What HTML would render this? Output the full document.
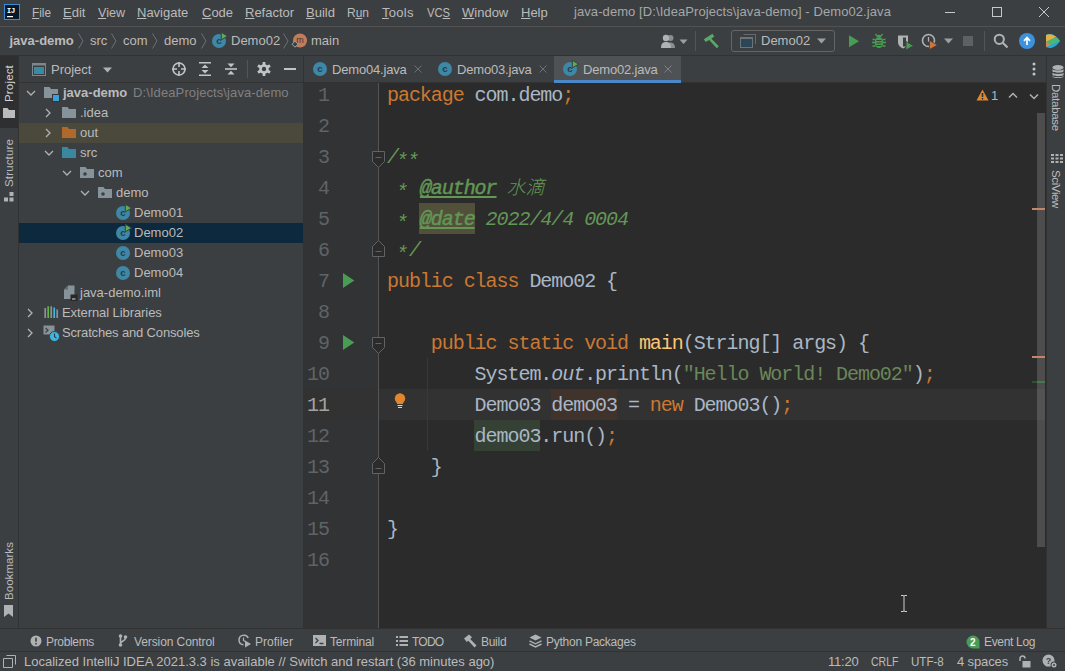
<!DOCTYPE html>
<html><head><meta charset="utf-8"><title>java-demo - Demo02.java</title>
<style>
*{box-sizing:border-box;margin:0;padding:0}
html,body{width:1065px;height:671px;overflow:hidden;background:#3c3f41}
body{position:relative;font-family:"Liberation Sans","Noto Sans CJK SC",sans-serif;font-size:13px;color:#bbbbbb}
.abs{position:absolute}
.t{position:absolute;white-space:nowrap;line-height:20px;height:20px;font-size:13px}
.sx{transform-origin:0 50%}
.b{font-weight:bold}
.g{color:#808080}
u{text-decoration:underline;text-underline-offset:1px;text-decoration-thickness:1px;text-decoration-skip-ink:none}
svg{position:absolute;overflow:visible}
/* frame */
#menubar{left:0;top:0;width:1065px;height:26px;background:#3c3f41}
#menuline{left:0;top:26px;width:1065px;height:1px;background:#515151}
#navbar{left:0;top:27px;width:1065px;height:28px;background:#3c3f41}
#navline{left:0;top:55px;width:1065px;height:1px;background:#323232}
#lstrip{left:0;top:56px;width:18px;height:573px;background:#3c3f41}
#lstripline{left:18px;top:56px;width:1px;height:573px;background:#323232}
#lactive{left:0;top:56px;width:18px;height:72px;background:#2d2f30}
#proj{left:19px;top:56px;width:284px;height:573px;background:#3c3f41}
#projline{left:303px;top:56px;width:1px;height:573px;background:#323232}
#projhead{left:19px;top:82px;width:284px;height:1px;background:#323232}
#tabs{left:304px;top:56px;width:742px;height:26px;background:#3c3f41}
#tabsline{left:304px;top:82px;width:742px;height:1px;background:#323232}
#editor{left:304px;top:83px;width:742px;height:546px;background:#2b2b2b}
#gutter{left:304px;top:83px;width:75px;height:546px;background:#313335}
#foldline{left:378px;top:83px;width:1px;height:546px;background:#555555}
#rstripline{left:1046px;top:56px;width:1px;height:573px;background:#323232}
#rstrip{left:1047px;top:56px;width:18px;height:573px;background:#3c3f41}
#botline{left:0;top:628px;width:1065px;height:1px;background:#323232}
#bottools{left:0;top:629px;width:1065px;height:22px;background:#3c3f41}
#statline{left:0;top:651px;width:1065px;height:1px;background:#323232}
#status{left:0;top:652px;width:1065px;height:19px;background:#3c3f41}
/* tree */
.row{position:absolute;left:19px;width:284px;height:20px}
/* vertical strip labels */
.vl{position:absolute;white-space:nowrap;font-size:12px;line-height:14px;height:14px;transform-origin:0 0}
/* code */
#codeclip{left:0;top:83px;width:1046px;height:545px;overflow:hidden}
#codeclip>*{margin-top:-83px}
#caretrow{left:379px;top:389px;width:666px;height:31px;background:#323232}
#caretgut{left:304px;top:389px;width:74px;height:31px;background:#323232}
#indent{left:427px;top:358px;width:1px;height:93px;background:#393939}
.ln{position:absolute;left:304px;width:25px;text-align:right;font-family:"Liberation Mono",monospace;font-size:20px;letter-spacing:-1.05px;line-height:31px;height:31px;color:#606366;padding-top:1px;box-sizing:content-box}
.ln.cur{color:#a4a3a3}
.cl{position:absolute;left:387px;white-space:pre;font-family:"Liberation Mono","Noto Sans CJK SC",monospace;font-size:20px;letter-spacing:-1.05px;line-height:31px;height:31px;color:#a9b7c6;padding-top:1px;box-sizing:content-box}
.cj{font-size:19px;font-weight:300;letter-spacing:0;margin-left:-1px}
.as{position:relative;top:4px;left:-2px}
.f{color:#ffc66d}.sf{font-style:italic}
.k{color:#cc7832}.s{color:#6a8759}.d{color:#629755;font-style:italic}.dt{color:#629755;font-style:italic;font-weight:normal;-webkit-text-stroke:0.45px #629755;text-decoration:underline;text-decoration-skip-ink:none;text-underline-offset:2px}
</style></head>
<body>
<!-- frame -->
<div class="abs" id="menubar"></div><div class="abs" id="menuline"></div>
<div class="abs" id="navbar"></div><div class="abs" id="navline"></div>
<div class="abs" id="lstrip"></div><div class="abs" id="lactive"></div><div class="abs" id="lstripline"></div>
<div class="abs" id="proj"></div><div class="abs" id="projhead"></div><div class="abs" id="projline"></div>
<div class="abs" id="tabs"></div><div class="abs" id="tabsline"></div>
<div class="abs" id="editor"></div><div class="abs" id="gutter"></div><div class="abs" id="foldline"></div>
<div class="abs" id="rstripline"></div><div class="abs" id="rstrip"></div>
<div class="abs" id="botline"></div><div class="abs" id="bottools"></div>
<div class="abs" id="statline"></div><div class="abs" id="status"></div>
<!-- MENU -->
<svg style="left:4px;top:4px" width="16" height="16" viewBox="0 0 16 16"><rect x="0.500" y="0.500" width="15" height="15" fill="#07182b" stroke="#3a8ed6" stroke-width="1"/><rect x="3" y="12" width="6" height="1.200" fill="#ffffff"/><text x="2.800" y="8.800" font-family="Liberation Mono,monospace" font-weight="bold" font-size="7.500" fill="#ffffff" letter-spacing="-0.500">IJ</text></svg>
<div class="t sx" style="left:32px;top:3px;transform:scaleX(0.905)"><u>F</u>ile</div>
<div class="t" style="left:63px;top:3px"><u>E</u>dit</div>
<div class="t sx" style="left:98px;top:3px;transform:scaleX(0.965)"><u>V</u>iew</div>
<div class="t" style="left:137px;top:3px"><u>N</u>avigate</div>
<div class="t" style="left:202px;top:3px"><u>C</u>ode</div>
<div class="t" style="left:245px;top:3px"><u>R</u>efactor</div>
<div class="t" style="left:306px;top:3px"><u>B</u>uild</div>
<div class="t sx" style="left:347px;top:3px;transform:scaleX(0.92)">R<u>u</u>n</div>
<div class="t" style="left:382px;top:3px;letter-spacing:0.3px"><u>T</u>ools</div>
<div class="t sx" style="left:427px;top:3px;transform:scaleX(0.865)">VC<u>S</u></div>
<div class="t" style="left:462px;top:3px"><u>W</u>indow</div>
<div class="t" style="left:521px;top:3px"><u>H</u>elp</div>
<div class="t" style="left:574px;top:2px;color:#a5a7a8;letter-spacing:0.08px">java-demo [D:\IdeaProjects\java-demo] - Demo02.java</div>
<!-- window controls -->
<svg style="left:944px;top:6px" width="12" height="12" viewBox="0 0 12 12"><path d="M1 6.5H11" stroke="#c8c8c8" stroke-width="1" fill="none"/></svg>
<svg style="left:991px;top:6px" width="12" height="12" viewBox="0 0 12 12"><rect x="1.5" y="1.5" width="9" height="9" stroke="#c8c8c8" stroke-width="1" fill="none"/></svg>
<svg style="left:1038px;top:6px" width="12" height="12" viewBox="0 0 12 12"><path d="M1 1L11 11M11 1L1 11" stroke="#c8c8c8" stroke-width="1" fill="none"/></svg>
<!-- NAV -->
<div class="t b" style="left:9.500px;top:31px">java-demo</div>
<svg style="left:77px;top:33px" width="8" height="16" viewBox="0 0 8 16"><path d="M1.5 0.5L6 8L1.5 15.5" stroke="#6e7173" stroke-width="1" fill="none"/></svg>
<div class="t" style="left:90px;top:31px">src</div>
<svg style="left:110px;top:33px" width="8" height="16" viewBox="0 0 8 16"><path d="M1.5 0.5L6 8L1.5 15.5" stroke="#6e7173" stroke-width="1" fill="none"/></svg>
<div class="t" style="left:123px;top:31px">com</div>
<svg style="left:151px;top:33px" width="8" height="16" viewBox="0 0 8 16"><path d="M1.5 0.5L6 8L1.5 15.5" stroke="#6e7173" stroke-width="1" fill="none"/></svg>
<div class="t" style="left:164px;top:31px">demo</div>
<svg style="left:200px;top:33px" width="8" height="16" viewBox="0 0 8 16"><path d="M1.5 0.5L6 8L1.5 15.5" stroke="#6e7173" stroke-width="1" fill="none"/></svg>
<svg style="left:211px;top:32px" width="17" height="17" viewBox="0 0 17 17"><circle cx="8" cy="9" r="7" fill="#3e87a6"/><text x="8" y="12" text-anchor="middle" font-family="Liberation Sans,sans-serif" font-size="9.500" font-weight="bold" fill="#243c49">c</text><path d="M10.300 0.300L16.600 4.100L10.300 7.900Z" fill="#5fad52" stroke="#3c3f41" stroke-width="1"/></svg>
<div class="t" style="left:231px;top:31px">Demo02</div>
<svg style="left:282px;top:33px" width="8" height="16" viewBox="0 0 8 16"><path d="M1.5 0.5L6 8L1.5 15.5" stroke="#6e7173" stroke-width="1" fill="none"/></svg>
<svg style="left:290px;top:32px" width="19" height="18" viewBox="0 0 19 18"><circle cx="10" cy="8.500" r="7" fill="#c07d5e"/><text x="10" y="11.300" text-anchor="middle" font-family="Liberation Sans,sans-serif" font-size="9" fill="#4d2f22">m</text><path d="M5 9.200L8 12.200L5 15.200L2 12.200Z" fill="#3c3f41" stroke="#9aa7b0" stroke-width="1"/></svg>
<div class="t" style="left:311px;top:31px">main</div>
<!-- right toolbar -->
<svg style="left:661px;top:34px" width="28" height="14" viewBox="0 0 28 14"><circle cx="9.5" cy="4" r="3" fill="#8a8d8f"/><path d="M5 14c0-4 2-5.5 4.5-5.5S14 10 14 14Z" fill="#8a8d8f"/><circle cx="5" cy="4" r="3.2" fill="#afb1b3"/><path d="M0 14c0-4.5 2-6 5-6s5 1.500 5 6Z" fill="#afb1b3"/><path d="M18.500 5.500h8l-4 4.500Z" fill="#9da0a2"/></svg>
<div class="abs" style="left:695px;top:31px;width:1px;height:20px;background:#555555"></div>
<svg style="left:703px;top:33px" width="17" height="16" viewBox="0 0 17 16"><path d="M0.800 6.200L9.500 0.800L11.300 3.700L8.300 5.600L15.800 13.200L13.800 15.200L6.200 6.900L2.600 9.100Z" fill="#59a869"/></svg>
<div class="abs" style="left:731px;top:30px;width:104px;height:22px;border:1px solid #646464;border-radius:3px"></div>
<svg style="left:740px;top:34px" width="16" height="14" viewBox="0 0 16 14"><path d="M3.500 0.500h12v9.500" stroke="#666a6c" fill="none"/><rect x="0.500" y="3.500" width="12" height="10" fill="#2c4657" stroke="#6b7479"/><rect x="0.500" y="3.500" width="12" height="1.500" fill="#6b7479"/></svg>
<div class="t" style="left:761px;top:31px">Demo02</div>
<svg style="left:817px;top:38px" width="9" height="6" viewBox="0 0 9 6"><path d="M0 0.500h9l-4.500 5Z" fill="#9da0a2"/></svg>
<svg style="left:848px;top:35px" width="12" height="13" viewBox="0 0 12 13"><path d="M1 0.300L11 6.300L1 12.300Z" fill="#499c54"/></svg>
<svg style="left:872px;top:33px" width="14" height="16" viewBox="0 0 14 16"><ellipse cx="7" cy="9.500" rx="4.200" ry="5.500" fill="#499c54"/><path d="M4.500 4.200a2.500 2.500 0 0 1 5 0Z" fill="#499c54"/><path d="M3.500 1L5 3M10.500 1L9 3M0.500 6.500h3M10.500 6.500h3M0 9.500h3.500M10.500 9.500h3.500M0.500 13h3M10.500 13h3" stroke="#499c54" stroke-width="1.300" fill="none"/><path d="M4.500 7.500h5M4.500 10h5M4.500 12.500h5" stroke="#3c3f41" stroke-width="1"/></svg>
<svg style="left:897px;top:34px" width="17" height="16" viewBox="0 0 17 16"><path d="M1 1.500h10v7c0 3-2.500 5-5 6c-2.500-1-5-3-5-6Z" fill="#afb1b3"/><path d="M6 3.500h3v9H6Z" fill="#3c3f41"/><path d="M9 7.500L16.500 11.700L9 16Z" fill="#499c54" stroke="#3c3f41" stroke-width="0.800"/></svg>
<svg style="left:921px;top:33px" width="17" height="17" viewBox="0 0 17 17"><circle cx="7.500" cy="7.500" r="6" fill="none" stroke="#afb1b3" stroke-width="1.600"/><path d="M7.500 4v4l2.500 1.500" stroke="#afb1b3" stroke-width="1.300" fill="none"/><path d="M8.500 7.500L16.500 12L8.500 16.500Z" fill="#d0743c" stroke="#3c3f41" stroke-width="0.800"/></svg>
<svg style="left:944px;top:38px" width="9" height="6" viewBox="0 0 9 6"><path d="M0 0.500h9l-4.500 5Z" fill="#9da0a2"/></svg>
<div class="abs" style="left:963px;top:36px;width:10px;height:10px;background:#5e6062"></div>
<div class="abs" style="left:984px;top:31px;width:1px;height:20px;background:#555555"></div>
<svg style="left:993px;top:33px" width="16" height="16" viewBox="0 0 16 16"><circle cx="6.300" cy="6.300" r="4.600" fill="none" stroke="#afb1b3" stroke-width="2"/><path d="M9.800 9.800L14.500 14.500" stroke="#afb1b3" stroke-width="2.200"/></svg>
<svg style="left:1019px;top:33px" width="16" height="16" viewBox="0 0 16 16"><circle cx="8" cy="8" r="8" fill="#3c93dd"/><path d="M8 12V5M5 7.800L8 4.600L11 7.800" stroke="#fff" stroke-width="1.700" fill="none"/></svg>
<svg style="left:1045px;top:33px" width="16" height="16" viewBox="0 0 16 16"><path d="M1 2C6 -1 12 3 15 8C12 13 6 17 1 14Z" fill="#21a6d9"/><path d="M1 2C5 0 9 2 11 4L1 9Z" fill="#e3b341"/><path d="M1 9L11 4C13 5.500 14 7 15 8L6 12Z" fill="#4fb477"/><path d="M1 9L6 12L1 14Z" fill="#d9894a"/></svg>
<!-- LEFT STRIP -->
<div class="vl" style="left:2px;top:102px;transform:rotate(-90deg);color:#d5d5d5;font-size:11.500px;letter-spacing:0.170px">Project</div>
<svg style="left:3px;top:108px" width="12" height="10" viewBox="0 0 12 10"><path d="M0 0h4.500l1.500 2H12v8H0Z" fill="#b9bbbd"/></svg>
<div class="vl" style="left:2px;top:187px;transform:rotate(-90deg);font-size:11.500px;letter-spacing:0.150px">Structure</div>
<svg style="left:4px;top:192px" width="10" height="10" viewBox="0 0 10 10"><rect x="5.500" y="0" width="4" height="4" fill="#afb1b3"/><rect x="0" y="5.500" width="4" height="4" fill="#afb1b3"/><rect x="5.500" y="5.500" width="4" height="4" fill="#afb1b3"/></svg>
<div class="vl" style="left:2px;top:600px;transform:rotate(-90deg);font-size:11.500px;letter-spacing:0.050px">Bookmarks</div>
<svg style="left:4px;top:605px" width="9" height="12" viewBox="0 0 9 12"><path d="M0 0h9v12l-4.500-3.500L0 12Z" fill="#afb1b3"/></svg>
<!-- PROJECT HEADER -->
<svg style="left:32px;top:63px" width="14" height="13" viewBox="0 0 14 13"><rect x="0.500" y="0.500" width="13" height="12" fill="#3c3f41" stroke="#7f878c"/><rect x="0.500" y="0.500" width="13" height="2" fill="#7f878c"/><rect x="2" y="4" width="10" height="7" fill="#3a8aa3"/></svg>
<div class="t" style="left:51px;top:60px">Project</div>
<svg style="left:103px;top:67px" width="9" height="6" viewBox="0 0 9 6"><path d="M0 0.500h9l-4.500 5Z" fill="#afb1b3"/></svg>
<svg style="left:171px;top:61px" width="16" height="16" viewBox="0 0 16 16"><circle cx="8" cy="8" r="6" fill="none" stroke="#c1c3c5" stroke-width="1.600"/><path d="M8 1v5M8 10v5M1 8h5M10 8h5" stroke="#c1c3c5" stroke-width="1.600"/></svg>
<svg style="left:197px;top:61px" width="16" height="16" viewBox="0 0 16 16"><path d="M2 1.800h12M2 14.200h12" stroke="#c1c3c5" stroke-width="1.600"/><path d="M8 3.500L11.500 7h-7ZM8 12.500L11.500 9h-7Z" fill="#c1c3c5"/></svg>
<svg style="left:223px;top:61px" width="16" height="16" viewBox="0 0 16 16"><path d="M2 8h12" stroke="#c1c3c5" stroke-width="1.600"/><path d="M8 6.300L11.500 2.500h-7ZM8 9.700L11.500 13.500h-7Z" fill="#c1c3c5"/></svg>
<div class="abs" style="left:247px;top:60px;width:1px;height:18px;background:#555555"></div>
<svg style="left:256px;top:61px" width="16" height="16" viewBox="0 0 16 16"><g fill="#c1c3c5"><circle cx="8" cy="8" r="4.800"/><rect x="6.600" y="1" width="2.800" height="14" rx="0.500"/><rect x="6.600" y="1" width="2.800" height="14" rx="0.500" transform="rotate(60 8 8)"/><rect x="6.600" y="1" width="2.800" height="14" rx="0.500" transform="rotate(120 8 8)"/></g><circle cx="8" cy="8" r="2.200" fill="#3c3f41"/></svg>
<div class="abs" style="left:284px;top:68px;width:12px;height:2px;background:#c1c3c5"></div>
<!-- TREE -->
<div class="row" style="top:123px;background:#4b493c"></div>
<div class="row" style="top:223px;background:#0d293e"></div>
<!-- row: java-demo -->
<svg style="left:26px;top:90px" width="10" height="6"><path d="M1 1L5 5L9 1" stroke="#afb1b3" stroke-width="1.300" fill="none"/></svg>
<svg style="left:44px;top:87px" width="16" height="14" viewBox="0 0 16 14"><path d="M0 0h5.500l1.500 2H14v9H0Z" fill="#87939a"/><rect x="8.500" y="7.500" width="7" height="7" fill="#3fa1d3" stroke="#33363a" stroke-width="1"/></svg>
<div class="t b" style="left:63px;top:83px">java-demo</div>
<div class="t g" style="left:133px;top:83px;letter-spacing:0.1px">D:\IdeaProjects\java-demo</div>
<!-- row: .idea -->
<svg style="left:45px;top:108px" width="6" height="10"><path d="M1 1L5 5L1 9" stroke="#afb1b3" stroke-width="1.300" fill="none"/></svg>
<svg style="left:62px;top:107px" width="15" height="12" viewBox="0 0 15 12"><path d="M0 0h5.500l1.500 2H14v9H0Z" fill="#87939a"/></svg>
<div class="t" style="left:80px;top:103px">.idea</div>
<!-- row: out -->
<svg style="left:45px;top:128px" width="6" height="10"><path d="M1 1L5 5L1 9" stroke="#afb1b3" stroke-width="1.300" fill="none"/></svg>
<svg style="left:62px;top:127px" width="15" height="12" viewBox="0 0 15 12"><path d="M0 0h5.500l1.500 2H14v9H0Z" fill="#b0692d"/></svg>
<div class="t" style="left:80px;top:123px">out</div>
<!-- row: src -->
<svg style="left:44px;top:150px" width="10" height="6"><path d="M1 1L5 5L9 1" stroke="#afb1b3" stroke-width="1.300" fill="none"/></svg>
<svg style="left:62px;top:147px" width="15" height="12" viewBox="0 0 15 12"><path d="M0 0h5.500l1.500 2H14v9H0Z" fill="#3a88a0"/></svg>
<div class="t" style="left:80px;top:143px">src</div>
<!-- row: com -->
<svg style="left:62px;top:170px" width="10" height="6"><path d="M1 1L5 5L9 1" stroke="#afb1b3" stroke-width="1.300" fill="none"/></svg>
<svg style="left:80px;top:167px" width="15" height="12" viewBox="0 0 15 12"><path d="M0 0h5.500l1.500 2H14v9H0Z" fill="#87939a"/><circle cx="5" cy="7" r="1.800" fill="#3c3f41"/></svg>
<div class="t" style="left:98px;top:163px">com</div>
<!-- row: demo -->
<svg style="left:80px;top:190px" width="10" height="6"><path d="M1 1L5 5L9 1" stroke="#afb1b3" stroke-width="1.300" fill="none"/></svg>
<svg style="left:98px;top:187px" width="15" height="12" viewBox="0 0 15 12"><path d="M0 0h5.500l1.500 2H14v9H0Z" fill="#87939a"/><circle cx="5" cy="7" r="1.800" fill="#3c3f41"/></svg>
<div class="t" style="left:116px;top:183px">demo</div>
<!-- class rows -->
<svg style="left:116px;top:206px" width="15" height="15"><circle cx="7" cy="7" r="7" fill="#3e87a6"/><text x="7" y="10" text-anchor="middle" font-family="Liberation Sans,sans-serif" font-size="9.500" font-weight="bold" fill="#243c49">c</text><path d="M9.300 -1.700L15.600 2.100L9.300 5.900Z" fill="#5fad52" stroke="#3c3f41" stroke-width="1"/></svg>
<div class="t" style="left:134px;top:203px">Demo01</div>
<svg style="left:116px;top:226px" width="15" height="15"><circle cx="7" cy="7" r="7" fill="#3e87a6"/><text x="7" y="10" text-anchor="middle" font-family="Liberation Sans,sans-serif" font-size="9.500" font-weight="bold" fill="#243c49">c</text><path d="M9.300 -1.700L15.600 2.100L9.300 5.900Z" fill="#5fad52" stroke="#3c3f41" stroke-width="1"/></svg>
<div class="t" style="left:134px;top:223px">Demo02</div>
<svg style="left:116px;top:246px" width="15" height="15"><circle cx="7" cy="7" r="7" fill="#3e87a6"/><text x="7" y="10" text-anchor="middle" font-family="Liberation Sans,sans-serif" font-size="9.500" font-weight="bold" fill="#243c49">c</text></svg>
<div class="t" style="left:134px;top:243px">Demo03</div>
<svg style="left:116px;top:266px" width="15" height="15"><circle cx="7" cy="7" r="7" fill="#3e87a6"/><text x="7" y="10" text-anchor="middle" font-family="Liberation Sans,sans-serif" font-size="9.500" font-weight="bold" fill="#243c49">c</text></svg>
<div class="t" style="left:134px;top:263px">Demo04</div>
<!-- row: iml -->
<svg style="left:64px;top:285px" width="14" height="16" viewBox="0 0 14 16"><path d="M4 0.500H10.500v13.500H0V4.500Z" fill="#87939a"/><path d="M4 0.500v4H0Z" fill="#5d676d"/><rect x="6.500" y="9.500" width="7" height="6.500" fill="#26282a"/><rect x="8" y="13.500" width="3.500" height="1" fill="#d8dadc"/></svg>
<div class="t" style="left:80px;top:283px">java-demo.iml</div>
<!-- row: External Libraries -->
<svg style="left:27px;top:308px" width="6" height="10"><path d="M1 1L5 5L1 9" stroke="#afb1b3" stroke-width="1.300" fill="none"/></svg>
<svg style="left:44px;top:306px" width="15" height="12" viewBox="0 0 15 12"><path d="M1.200 2v10" stroke="#87939a" stroke-width="1.700"/><path d="M4.200 0.300v11.700" stroke="#62b543" stroke-width="1.700"/><path d="M7.200 0.300v11.700" stroke="#87939a" stroke-width="1.700"/><path d="M10.200 1.500v10.500" stroke="#40b6e0" stroke-width="1.700"/><path d="M13.200 3.500v8.500" stroke="#87939a" stroke-width="1.700"/></svg>
<div class="t" style="left:62px;top:303px;letter-spacing:-0.08px">External Libraries</div>
<!-- row: Scratches -->
<svg style="left:27px;top:328px" width="6" height="10"><path d="M1 1L5 5L1 9" stroke="#afb1b3" stroke-width="1.300" fill="none"/></svg>
<svg style="left:43px;top:325px" width="17" height="17" viewBox="0 0 17 17"><path d="M0.500 0.500h11v9h-11Z" fill="#87939a"/><path d="M2.500 3L5 5.200L2.500 7.500" stroke="#3c3f41" stroke-width="1.200" fill="none"/><circle cx="11.500" cy="11.500" r="5" fill="#40b6e0" stroke="#3c3f41" stroke-width="1"/><path d="M11.500 8.500v3.200l2 1.300" stroke="#3c3f41" stroke-width="1.200" fill="none"/></svg>
<div class="t" style="left:62px;top:323px;letter-spacing:-0.15px">Scratches and Consoles</div>
<!-- TABS -->
<div class="abs" style="left:554px;top:56px;width:127px;height:27px;background:#4e5254"></div>
<div class="abs" style="left:554px;top:80px;width:127px;height:3px;background:#4a88c7"></div>
<svg style="left:313px;top:62px" width="15" height="15"><circle cx="7" cy="7" r="7" fill="#3e87a6"/><text x="7" y="10" text-anchor="middle" font-family="Liberation Sans,sans-serif" font-size="9.500" font-weight="bold" fill="#243c49">c</text></svg>
<div class="t" style="left:332px;top:60px;letter-spacing:-0.18px">Demo04.java</div>
<svg style="left:414px;top:65px" width="8" height="8" viewBox="0 0 8 8"><path d="M0.500 0.500L7.500 7.500M7.500 0.500L0.500 7.500" stroke="#6e7072" stroke-width="1" fill="none"/></svg>
<svg style="left:438px;top:62px" width="15" height="15"><circle cx="7" cy="7" r="7" fill="#3e87a6"/><text x="7" y="10" text-anchor="middle" font-family="Liberation Sans,sans-serif" font-size="9.500" font-weight="bold" fill="#243c49">c</text></svg>
<div class="t" style="left:457px;top:60px;letter-spacing:-0.18px">Demo03.java</div>
<svg style="left:539px;top:65px" width="8" height="8" viewBox="0 0 8 8"><path d="M0.500 0.500L7.500 7.500M7.500 0.500L0.500 7.500" stroke="#6e7072" stroke-width="1" fill="none"/></svg>
<svg style="left:563px;top:62px" width="15" height="15"><circle cx="7" cy="7" r="7" fill="#3e87a6"/><text x="7" y="10" text-anchor="middle" font-family="Liberation Sans,sans-serif" font-size="9.500" font-weight="bold" fill="#243c49">c</text><path d="M9.300 -1.700L15.600 2.100L9.300 5.900Z" fill="#5fad52" stroke="#3c3f41" stroke-width="1"/></svg>
<div class="t" style="left:583px;top:60px;letter-spacing:-0.18px">Demo02.java</div>
<svg style="left:664px;top:65px" width="8" height="8" viewBox="0 0 8 8"><path d="M0.500 0.500L7.500 7.500M7.500 0.500L0.500 7.500" stroke="#7d8082" stroke-width="1" fill="none"/></svg>
<svg style="left:1032px;top:62px" width="4" height="14" viewBox="0 0 4 14"><circle cx="2" cy="2" r="1.500" fill="#c1c3c5"/><circle cx="2" cy="7" r="1.500" fill="#c1c3c5"/><circle cx="2" cy="12" r="1.500" fill="#c1c3c5"/></svg>
<!-- CODE -->
<div class="abs" id="codeclip">
<div class="abs" id="caretrow"></div><div class="abs" id="caretgut"></div><div class="abs" id="indent"></div>
<div class="abs" style="left:419px;top:203px;width:56px;height:31px;background:#52503a"></div>
<div class="abs" style="left:551px;top:389px;width:66px;height:31px;background:#40332b"></div>
<div class="abs" style="left:474px;top:420px;width:66px;height:31px;background:#344134"></div>
<div class="ln" style="top:79px">1</div>
<div class="cl" style="top:79px"><span class="k">package</span> com.demo<span class="k">;</span></div>
<div class="ln" style="top:110px">2</div>
<div class="ln" style="top:141px">3</div>
<div class="cl" style="top:141px"><span class="d">/<span class="as">*</span><span class="as">*</span></span></div>
<div class="ln" style="top:172px">4</div>
<div class="cl" style="top:172px"><span class="d"> <span class="as">*</span> <span class="dt">@author</span> <span class="cj">水滴</span></span></div>
<div class="ln" style="top:203px">5</div>
<div class="cl" style="top:203px"><span class="d"> <span class="as">*</span> <span class="dt">@date</span> 2022/4/4 0004</span></div>
<div class="ln" style="top:234px">6</div>
<div class="cl" style="top:234px"><span class="d"> <span class="as">*</span>/</span></div>
<div class="ln" style="top:265px">7</div>
<div class="cl" style="top:265px"><span class="k">public class</span> Demo02 {</div>
<div class="ln" style="top:296px">8</div>
<div class="ln" style="top:327px">9</div>
<div class="cl" style="top:327px">    <span class="k">public static void</span> <span class="f">main</span>(String[] args) {</div>
<div class="ln" style="top:358px">10</div>
<div class="cl" style="top:358px">        System.<span class="sf">out</span>.println(<span class="s">"Hello World! Demo02"</span>)<span class="k">;</span></div>
<div class="ln cur" style="top:389px">11</div>
<div class="cl" style="top:389px">        Demo03 demo03 = <span class="k">new</span> Demo03()<span class="k">;</span></div>
<div class="ln" style="top:420px">12</div>
<div class="cl" style="top:420px">        demo03.run()<span class="k">;</span></div>
<div class="ln" style="top:451px">13</div>
<div class="cl" style="top:451px">    }</div>
<div class="ln" style="top:482px">14</div>
<div class="ln" style="top:513px">15</div>
<div class="cl" style="top:513px">}</div>
<div class="ln" style="top:544px">16</div>
</div>
<!-- GUTTER ICONS -->
<svg style="left:343px;top:273px" width="12" height="15" viewBox="0 0 12 15"><path d="M0 0L11.300 7.500L0 15Z" fill="#499c54"/></svg>
<svg style="left:343px;top:335px" width="12" height="15" viewBox="0 0 12 15"><path d="M0 0L11.300 7.500L0 15Z" fill="#499c54"/></svg>
<!-- fold start markers: lines 3, 9 -->
<svg style="left:372px;top:151px" width="13" height="17" viewBox="0 0 13 17"><path d="M0.500 0.500h12v10l-6 6l-6-6Z" fill="#2b2b2b" stroke="#606366"/><path d="M3.500 6.500h6" stroke="#606366"/></svg>
<svg style="left:372px;top:337px" width="13" height="17" viewBox="0 0 13 17"><path d="M0.500 0.500h12v10l-6 6l-6-6Z" fill="#2b2b2b" stroke="#606366"/><path d="M3.500 6.500h6" stroke="#606366"/></svg>
<!-- fold end markers: lines 6, 13 -->
<svg style="left:372px;top:240px" width="13" height="17" viewBox="0 0 13 17"><path d="M0.500 16.500h12v-10l-6-6l-6 6Z" fill="#2b2b2b" stroke="#606366"/><path d="M3.500 11.500h6" stroke="#606366"/></svg>
<svg style="left:372px;top:457px" width="13" height="17" viewBox="0 0 13 17"><path d="M0.500 16.500h12v-10l-6-6l-6 6Z" fill="#2b2b2b" stroke="#606366"/><path d="M3.500 11.500h6" stroke="#606366"/></svg>
<!-- bulb -->
<svg style="left:394px;top:393px" width="12" height="16" viewBox="0 0 12 16"><circle cx="6" cy="5.500" r="5.200" fill="#e0872e"/><path d="M3 8h6v3H3Z" fill="#e0872e"/><path d="M3.500 12.500h5M4 14.500h4" stroke="#d8d8d8" stroke-width="1"/></svg>
<!-- inspection widget -->
<svg style="left:976px;top:89px" width="13" height="12" viewBox="0 0 13 12"><path d="M6.500 0.500L12.500 11.500H0.500Z" fill="#e0872e"/><path d="M6.500 4v4M6.500 9v1.500" stroke="#2b2b2b" stroke-width="1.500"/></svg>
<div class="t" style="left:991px;top:86px;font-size:13px;color:#a9b7c6">1</div>
<svg style="left:1008px;top:92px" width="10" height="7" viewBox="0 0 10 7"><path d="M1 5.500L5 1.500L9 5.500" stroke="#afb1b3" stroke-width="1.500" fill="none"/></svg>
<svg style="left:1029px;top:93px" width="10" height="7" viewBox="0 0 10 7"><path d="M1 1.500L5 5.500L9 1.500" stroke="#afb1b3" stroke-width="1.500" fill="none"/></svg>
<!-- scrollbar + stripe -->
<div class="abs" style="left:1037px;top:113px;width:8px;height:434px;background:rgba(255,255,255,0.165)"></div>
<div class="abs" style="left:1032px;top:208px;width:13px;height:2px;background:#c4866a"></div>
<div class="abs" style="left:1032px;top:356px;width:13px;height:2px;background:#c4866a"></div>
<div class="abs" style="left:1032px;top:381px;width:5px;height:2px;background:#2c5232"></div><div class="abs" style="left:1037px;top:381px;width:8px;height:2px;background:#427a4a"></div>
<!-- mouse I-beam -->
<svg style="left:900px;top:595px" width="8" height="17" viewBox="0 0 8 17"><path d="M1 0.500h2.500l0.500 1l0.500-1H7M4 1.500v14M1 16.500h2.500l0.500-1l0.500 1H7" stroke="#d0d0d0" stroke-width="1" fill="none"/></svg>
<!-- RIGHT STRIP -->
<svg style="left:1052px;top:65px" width="12" height="13" viewBox="0 0 12 13"><g fill="#afb1b3"><ellipse cx="6" cy="2.500" rx="5.500" ry="2.500"/><path d="M0.500 4.200c1 1.600 10 1.600 11 0v2.300c-1 1.600-10 1.600-11 0Z"/><path d="M0.500 7.700c1 1.600 10 1.600 11 0v2.300c-1 1.600-10 1.600-11 0Z"/><path d="M0.500 11.100c1 1.600 10 1.600 11 0v0.600c-1 1.700-10 1.700-11 0Z"/></g></svg>
<div class="vl" style="left:1063px;top:84px;transform:rotate(90deg);font-size:11.500px;letter-spacing:-0.290px">Database</div>
<svg style="left:1051px;top:154px" width="12" height="9" viewBox="0 0 12 9"><g fill="#afb1b3"><rect x="0" y="0" width="3" height="2"/><rect x="4.500" y="0" width="3" height="2"/><rect x="9" y="0" width="3" height="2"/><rect x="0" y="3.500" width="3" height="2"/><rect x="4.500" y="3.500" width="3" height="2"/><rect x="9" y="3.500" width="3" height="2"/><rect x="0" y="7" width="3" height="2"/><rect x="4.500" y="7" width="3" height="2"/><rect x="9" y="7" width="3" height="2"/></g></svg>
<div class="vl" style="left:1063px;top:170px;transform:rotate(90deg);font-size:11.500px;letter-spacing:-0.390px">SciView</div>
<!-- BOTTOM TOOLS -->
<svg style="left:30px;top:635px" width="12" height="12" viewBox="0 0 12 12"><circle cx="6" cy="6" r="5.500" fill="#afb1b3"/><path d="M6 2.800v4M6 8v1.500" stroke="#3c3f41" stroke-width="1.600"/></svg>
<div class="t" style="left:46px;top:632px;font-size:12px;letter-spacing:-0.34px">Problems</div>
<svg style="left:118px;top:634px" width="10" height="13" viewBox="0 0 10 13"><path d="M2.500 1v11M2.500 9.500c0-2.500 5-2 5-5.500" stroke="#afb1b3" stroke-width="1.600" fill="none"/><circle cx="2.500" cy="2" r="1.800" fill="#afb1b3"/><circle cx="7.500" cy="3" r="1.800" fill="#afb1b3"/><circle cx="2.500" cy="11" r="1.800" fill="#afb1b3"/></svg>
<div class="t" style="left:134px;top:632px;font-size:12px;letter-spacing:-0.1px">Version Control</div>
<svg style="left:238px;top:634px" width="14" height="14" viewBox="0 0 14 14"><path d="M10.200 4A4.800 4.800 0 1 0 5.500 10.800" stroke="#afb1b3" stroke-width="1.500" fill="none"/><path d="M5.500 3.500v3l1.500 1" stroke="#afb1b3" stroke-width="1.200" fill="none"/><path d="M7 6.500L13 10L7 13.500Z" fill="#afb1b3"/></svg>
<div class="t" style="left:255px;top:632px;font-size:12px">Profiler</div>
<svg style="left:313px;top:635px" width="13" height="11" viewBox="0 0 13 11"><rect x="0" y="0" width="13" height="11" fill="#afb1b3"/><path d="M2.500 3L5 5.500L2.500 8M6.500 8.500h4" stroke="#3c3f41" stroke-width="1.300" fill="none"/></svg>
<div class="t" style="left:330px;top:632px;font-size:12px;letter-spacing:-0.17px">Terminal</div>
<svg style="left:396px;top:636px" width="12" height="10" viewBox="0 0 12 10"><g fill="#afb1b3"><rect x="0" y="0" width="2" height="2"/><rect x="3.500" y="0" width="8.500" height="2"/><rect x="0" y="4" width="2" height="2"/><rect x="3.500" y="4" width="8.500" height="2"/><rect x="0" y="8" width="2" height="2"/><rect x="3.500" y="8" width="8.500" height="2"/></g></svg>
<div class="t" style="left:412px;top:632px;font-size:12px;letter-spacing:-0.75px">TODO</div>
<svg style="left:463px;top:634px" width="14" height="14" viewBox="0 0 14 14"><path d="M1 4.500L6 0.500L9 3.200L7.200 5L13.500 11.500L11.500 13.500L5.300 6.800L3.800 8Z" fill="#afb1b3"/></svg>
<div class="t" style="left:481px;top:632px;font-size:12px;letter-spacing:-0.28px">Build</div>
<svg style="left:529px;top:634px" width="13" height="14" viewBox="0 0 13 14"><path d="M6.500 0.500L12.500 3.500L6.500 6.500L0.500 3.500Z" fill="#afb1b3"/><path d="M0.500 6.800L6.500 9.800L12.500 6.800M0.500 10L6.500 13L12.500 10" stroke="#afb1b3" stroke-width="1.400" fill="none"/></svg>
<div class="t" style="left:546px;top:632px;font-size:12px;letter-spacing:-0.25px">Python Packages</div>
<svg style="left:966px;top:635px" width="14" height="14" viewBox="0 0 14 14"><path d="M7 0.500A6.500 6.500 0 1 0 7 13.500H13.500V7A6.500 6.500 0 0 0 7 0.500Z" fill="#499c54"/><text x="6.800" y="10.600" text-anchor="middle" font-family="Liberation Sans,sans-serif" font-weight="bold" font-size="10" fill="#ffffff">2</text></svg>
<div class="t" style="left:984px;top:632px;font-size:12px;letter-spacing:-0.33px">Event Log</div>
<!-- STATUS BAR -->
<svg style="left:3px;top:655px" width="13" height="13" viewBox="0 0 13 13"><path d="M3.500 0.500h9v9M0.500 3.500h9v9h-9Z" stroke="#afb1b3" stroke-width="1" fill="none"/></svg>
<div class="t" style="left:24px;top:652px">Localized IntelliJ IDEA 2021.3.3 is available // Switch and restart (36 minutes ago)</div>
<div class="t" style="left:828px;top:652px;letter-spacing:-0.2px">11:20</div>
<div class="t sx" style="left:871px;top:652px;transform:scaleX(0.81)">CRLF</div>
<div class="t sx" style="left:911px;top:652px;transform:scaleX(0.89)">UTF-8</div>
<div class="t" style="left:957px;top:652px;letter-spacing:-0.12px">4 spaces</div>
<svg style="left:1018px;top:655px" width="13" height="13" viewBox="0 0 13 13"><path d="M2 6V3.500a2.500 2.500 0 0 1 5 0" stroke="#afb1b3" stroke-width="1.500" fill="none"/><rect x="4.500" y="6" width="8" height="6.500" fill="#afb1b3"/></svg>
<svg style="left:1042px;top:654px" width="16" height="15" viewBox="0 0 16 15"><path d="M6.500 0.500a6 6 0 0 0-6 6c0 3 2 5 4 6h4a5 5 0 0 0 4-6a6 6 0 0 0-6-6Z" fill="#afb1b3"/><text x="6.500" y="9.500" text-anchor="middle" font-family="Liberation Sans,sans-serif" font-weight="bold" font-size="9" fill="#3c3f41">?</text><circle cx="12" cy="11" r="3.500" fill="#3c3f41"/><circle cx="12" cy="11" r="2.500" fill="#afb1b3"/><circle cx="12" cy="11" r="1" fill="#3c3f41"/></svg>
</body></html>
